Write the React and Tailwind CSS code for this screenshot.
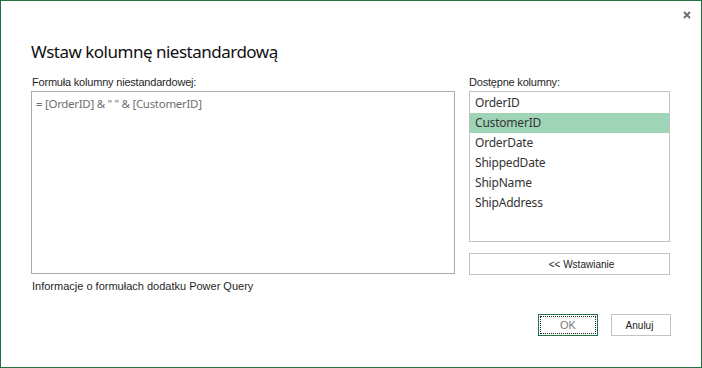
import React from "react";

const columns = ["OrderID", "CustomerID", "OrderDate", "ShippedDate", "ShipName", "ShipAddress"];

export default function App() {
  return (
    <div className="w-[702px] h-[368px] bg-white border border-[#217346] flex flex-col font-['Noto_Sans',sans-serif] text-[#1f1f1f]">
      <div className="h-[29px] flex justify-end items-start pt-[10px] pr-[10px]">
        <svg width="8" height="8" viewBox="0 0 8 8">
          <path d="M1 1 L7 7 M7 1 L1 7" stroke="#6b6b6b" strokeWidth="1.8" />
        </svg>
      </div>
      <div className="px-[30px] mt-[10px] text-[17px] leading-[24px] tracking-[-0.5px] text-[#111]">Wstaw kolumnę niestandardową</div>
      <div className="px-[30px] mt-[11px] flex gap-[14px]">
        <div className="w-[424px] flex flex-col">
          <div className="text-[11px] leading-[15px] font-['Liberation_Sans',sans-serif] pl-[1px] tracking-[-0.2px]">Formuła kolumny niestandardowej:</div>
          <div className="mt-[1px] h-[183px] border border-[#ababab] px-[4px] py-[3px] text-[11.5px] leading-[18px] tracking-[-0.3px] text-[#707070]">
            = [OrderID] &amp; " " &amp; [CustomerID]
          </div>
          <div className="mt-[5px] text-[11px] leading-[15px] font-['Liberation_Sans',sans-serif] pl-[1px]">Informacje o formułach dodatku Power Query</div>
        </div>
        <div className="w-[201px] flex flex-col">
          <div className="text-[11px] leading-[15px] font-['Liberation_Sans',sans-serif] tracking-[-0.2px]">Dostępne kolumny:</div>
          <div className="mt-[1px] h-[151px] border border-[#c3c3c3] flex flex-col pt-[1px]">
            {columns.map((c, i) => (
              <div
                key={c}
                className={
                  i === 1
                    ? "h-[20px] px-[5px] flex items-center text-[12px] tracking-[-0.2px] text-[#333] bg-[#9fd5b6]"
                    : "h-[20px] px-[5px] flex items-center text-[12px] tracking-[-0.2px] text-[#333]"
                }
              >
                {c}
              </div>
            ))}
          </div>
          <div className="mt-[11px] h-[22px] border border-[#c3c3c3] flex items-center justify-center pl-[24px] text-[10px] font-['Liberation_Sans',sans-serif] text-[#222]">
            &lt;&lt; Wstawianie
          </div>
        </div>
      </div>
      <div className="px-[30px] mt-[20px] flex justify-end gap-[13px]">
        <div className="w-[60px] h-[22px] border border-[#217346] p-[1px]">
          <div className="w-full h-full border border-dotted border-[#222] flex items-center justify-center text-[11px] font-['Liberation_Sans',sans-serif] text-[#7a7a7a]">
            OK
          </div>
        </div>
        <div className="w-[60px] h-[22px] border border-[#c3c3c3] flex items-center justify-center pr-[3px] text-[10px] font-['Liberation_Sans',sans-serif] text-[#222]">
          Anuluj
        </div>
      </div>
    </div>
  );
}
